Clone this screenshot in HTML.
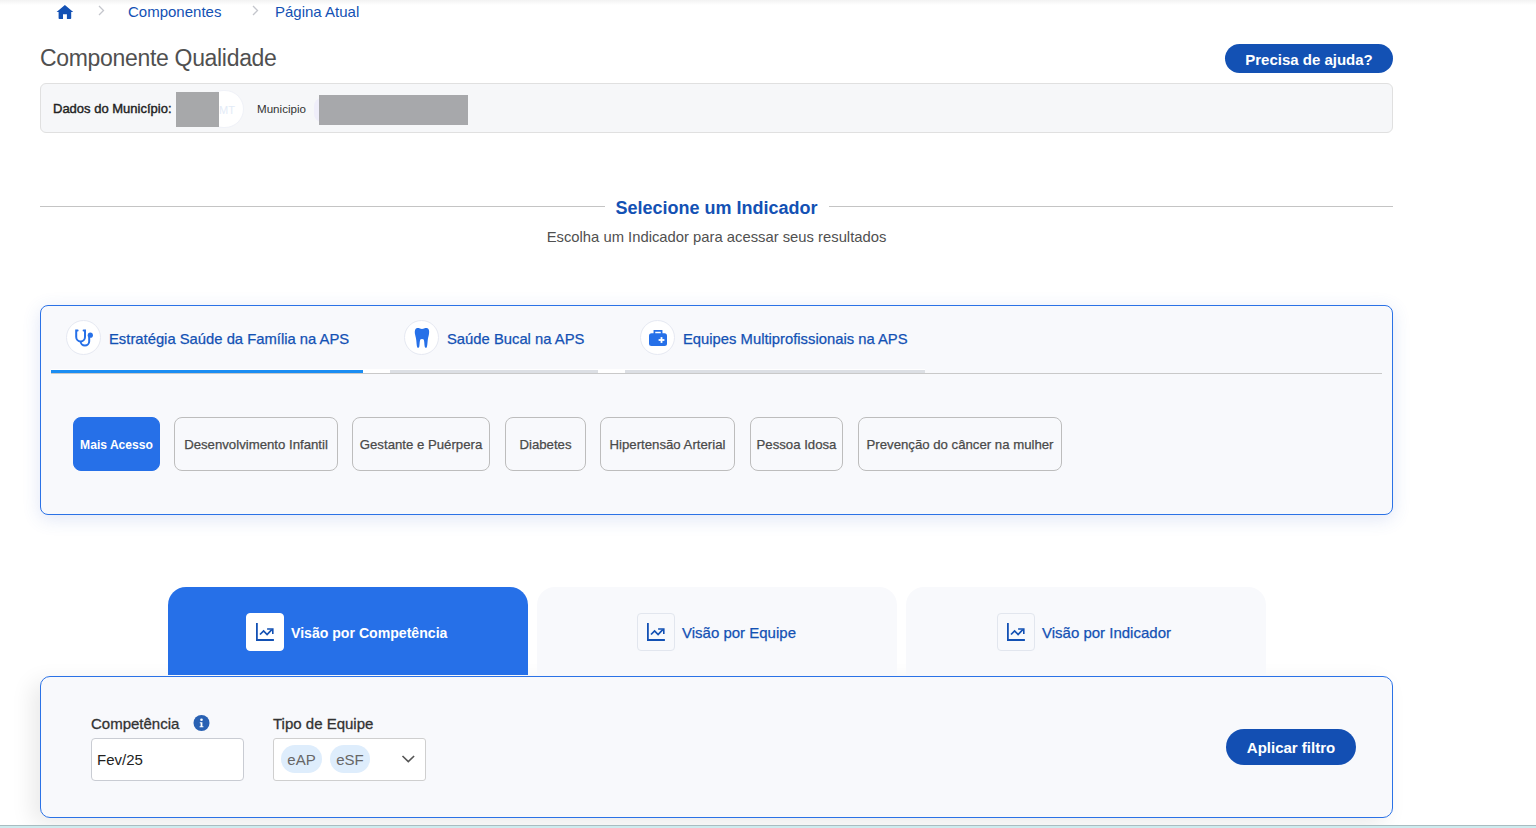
<!DOCTYPE html>
<html lang="pt-BR">
<head>
<meta charset="utf-8">
<title>Componente Qualidade</title>
<style>
*{box-sizing:border-box;margin:0;padding:0}
html,body{width:1536px;height:828px;overflow:hidden;background:#fff;font-family:"Liberation Sans",sans-serif;position:relative}
.abs{position:absolute}
.topshadow{position:absolute;left:0;top:0;width:1536px;height:5px;background:linear-gradient(#f2f2f2,#fff)}
.bottombar{position:absolute;left:0;top:825px;width:1536px;height:3px;background:#cdebee;border-top:1px solid #a9bcc0}
/* breadcrumb */
.crumb{position:absolute;top:3px;font-size:15px;color:#1351b4;white-space:nowrap;line-height:18px}
.chev{position:absolute;top:5px}
/* title */
.title{position:absolute;left:40px;top:44px;font-size:23px;color:#505050;line-height:28px;white-space:nowrap;letter-spacing:-0.32px}
.help{position:absolute;left:1225px;top:44px;width:168px;height:29px;border-radius:15px;background:#1351b4;color:#fff;font-weight:bold;font-size:15px;line-height:31px;text-align:center}
.mun{position:absolute;left:40px;top:83px;width:1353px;height:50px;border:1px solid #e0e0e0;border-radius:6px;background:#f6f7f9}
.hline{position:absolute;top:206px;height:1px;background:#c4c4c4}
.sel{position:absolute;left:0;width:1433px;top:197px;text-align:center;font-size:18px;font-weight:bold;color:#1351b4;line-height:22px;white-space:nowrap}
.sub{position:absolute;left:0;width:1433px;top:228px;text-align:center;font-size:14.8px;color:#505050;line-height:18px;white-space:nowrap}
.card{position:absolute;left:40px;top:305px;width:1353px;height:210px;border:1px solid #2b72e6;border-radius:8px;background:#f8f9fc;box-shadow:0 4px 18px rgba(60,100,200,.16)}
.tabtxt{position:absolute;top:330px;font-size:14.8px;-webkit-text-stroke:0.25px #1351b4;color:#1351b4;line-height:18px;white-space:nowrap}
.circ{position:absolute;top:320px;width:35px;height:35px;border-radius:50%;background:#fff;border:1px solid #e6e9f2}
.uline{position:absolute;top:370px;height:3px}
.ind{position:absolute;top:417px;height:54px;border:1px solid #bdbdbd;border-radius:8px;font-size:13.2px;color:#4a4a4a;-webkit-text-stroke:0.25px #4a4a4a;text-align:center;line-height:54px;white-space:nowrap;background:#f8f9fc}
.ind.on{background:#2670e8;border-color:#2670e8;color:#fff;font-weight:bold;font-size:12.1px;-webkit-text-stroke:0}
.vtab{position:absolute;top:587px;width:360px;height:89px;border-radius:18px 18px 0 0;background:#f8f9fc}
.vtab.on{background:#2670e8;height:88px}
.vicon{position:absolute;width:38px;height:38px;top:613px;border:1px solid #e2e6ee;border-radius:4px;background:#f8f9fc}
.vtxt{position:absolute;top:624px;font-size:15px;-webkit-text-stroke:0.25px #1351b4;color:#1351b4;line-height:18px;white-space:nowrap}
.filt{position:absolute;left:40px;top:676px;width:1353px;height:142px;border:1px solid #2b72e6;border-radius:10px;background:#f8f9fc;box-shadow:-8px 6px 22px rgba(0,0,0,.085)}
.lbl{position:absolute;top:715px;font-size:15px;color:#333;-webkit-text-stroke:0.3px #333;line-height:18px;white-space:nowrap}
.inp{position:absolute;top:738px;height:43px;background:#fff;border:1px solid #c9ccd3;border-radius:4px}
.chip{position:absolute;top:745px;height:28px;border-radius:14px;background:#deedfc;color:#666;font-size:15px;line-height:30px;text-align:center}
.apl{position:absolute;left:1226px;top:729px;width:130px;height:36px;border-radius:18px;background:#134fb3;color:#fff;font-weight:bold;font-size:15px;line-height:37px;text-align:center}
</style>
</head>
<body>
<div class="topshadow"></div>

<!-- breadcrumb -->
<svg class="abs" style="left:56px;top:4px" width="18" height="16" viewBox="0 0 18 16"><path d="M8.9 1 L0.6 8 L2.6 8 L2.6 14.2 Q2.6 15 3.4 15 L7 15 L7 10.3 L10.9 10.3 L10.9 15 L14.4 15 Q15.2 15 15.2 14.2 L15.2 8 L17.2 8 Z" fill="#1351b4"/></svg>
<svg class="chev" style="left:98px" width="7" height="11" viewBox="0 0 7 11"><path d="M1 1 L5.5 5.5 L1 10" fill="none" stroke="#c4c6cc" stroke-width="1.3"/></svg>
<div class="crumb" style="left:128px">Componentes</div>
<svg class="chev" style="left:252px" width="7" height="11" viewBox="0 0 7 11"><path d="M1 1 L5.5 5.5 L1 10" fill="none" stroke="#c4c6cc" stroke-width="1.3"/></svg>
<div class="crumb" style="left:275px">Página Atual</div>

<div class="title">Componente Qualidade</div>
<div class="help">Precisa de ajuda?</div>

<div class="mun"></div>
<div class="abs" style="left:53px;top:101px;font-size:13px;color:#222;-webkit-text-stroke:0.4px #222;line-height:16px;white-space:nowrap">Dados do Município:</div>
<div class="abs" style="left:204px;top:90px;width:40px;height:38px;border-radius:19px;background:#fff;border:1px solid #f0f2f8"></div>
<div class="abs" style="left:219px;top:103px;font-size:11px;color:#e3ebf7;line-height:14px">MT</div>
<div class="abs" style="left:176px;top:92px;width:43px;height:35px;background:#a7a8aa"></div>
<div class="abs" style="left:257px;top:102px;font-size:11.6px;color:#333;line-height:14px;white-space:nowrap">Municipio</div>
<div class="abs" style="left:314px;top:98px;width:16px;height:24px;border-radius:12px;background:#efeefa"></div>
<div class="abs" style="left:319px;top:95px;width:149px;height:30px;background:#a7a8ab"></div>

<div class="hline" style="left:40px;width:565px"></div>
<div class="hline" style="left:829px;width:564px"></div>
<div class="sel">Selecione um Indicador</div>
<div class="sub">Escolha um Indicador para acessar seus resultados</div>

<div class="card"></div>
<div class="abs" style="left:51px;top:373px;width:1331px;height:1px;background:#c9c9c9"></div>
<div class="abs" style="left:51px;top:369px;width:874px;height:4px;background:#fff"></div>
<div class="uline" style="left:51px;width:312px;background:#1b8df2"></div>
<div class="uline" style="left:390px;width:208px;background:#dcdfe4"></div>
<div class="uline" style="left:625px;width:300px;background:#dcdfe4"></div>
<div class="circ" style="left:66px"></div>
<svg class="abs" style="left:72px;top:326px" width="24" height="24" viewBox="0 0 24 24"><path d="M5.6 4.4 H4.2 V11 a4.4 4.4 0 0 0 8.8 0 V4.4 H11.6" fill="none" stroke="#2670e8" stroke-width="2" stroke-linecap="round"/><path d="M8.6 15.3 a4.3 4.3 0 0 0 8.6 0 V9.5" fill="none" stroke="#2670e8" stroke-width="2"/><circle cx="18.3" cy="9.2" r="2.6" fill="#2670e8"/></svg>
<div class="tabtxt" style="left:109px">Estratégia Saúde da Família na APS</div>
<div class="circ" style="left:404px"></div>
<svg class="abs" style="left:412px;top:326px" width="20" height="24" viewBox="0 0 20 24"><path d="M4.6 2.2 C6.5 1.6 8.2 2.6 10 3.1 C11.8 2.6 13.5 1.6 15.4 2.2 C17.3 2.8 17.4 6 16.9 8.5 C16.5 10.5 16 12 15.7 14.5 C15.4 17 15.4 20 14.7 21.4 C14.1 22.2 13 22 12.7 20.6 C12.3 18.5 12.4 15 11.7 13.6 C11.2 12.7 8.8 12.7 8.3 13.6 C7.6 15 7.7 18.5 7.3 20.6 C7 22 5.9 22.2 5.3 21.4 C4.6 20 4.6 17 4.3 14.5 C4 12 3.5 10.5 3.1 8.5 C2.6 6 2.7 2.8 4.6 2.2 Z" fill="#2670e8"/></svg>
<div class="tabtxt" style="left:447px">Saúde Bucal na APS</div>
<div class="circ" style="left:640px"></div>
<svg class="abs" style="left:648px;top:329px" width="20" height="18" viewBox="0 0 20 18"><path d="M6.4 5 V1.9 H13.6 V5" fill="none" stroke="#2670e8" stroke-width="1.7"/><rect x="1" y="4.2" width="18" height="12.8" rx="2.5" fill="#2670e8"/><rect x="10.6" y="10.1" width="5.8" height="1.8" fill="#fff"/><rect x="12.6" y="8.1" width="1.8" height="5.8" fill="#fff"/></svg>
<div class="tabtxt" style="left:683px">Equipes Multiprofissionais na APS</div>
<div class="ind on" style="left:73px;width:87px">Mais Acesso</div>
<div class="ind" style="left:174px;width:164px">Desenvolvimento Infantil</div>
<div class="ind" style="left:352px;width:138px">Gestante e Puérpera</div>
<div class="ind" style="left:505px;width:81px">Diabetes</div>
<div class="ind" style="left:600px;width:135px">Hipertensão Arterial</div>
<div class="ind" style="left:750px;width:93px">Pessoa Idosa</div>
<div class="ind" style="left:858px;width:204px">Prevenção do câncer na mulher</div>

<div class="filt"></div>
<div class="vtab on" style="left:168px"></div>
<div class="vtab" style="left:537px"></div>
<div class="vtab" style="left:906px"></div>
<div class="vicon" style="left:246px;background:#fff;border-color:#fff"></div>
<svg class="abs" style="left:246px;top:614px" width="36" height="36" viewBox="0 0 36 36"><path d="M10.9 9 V26 H27.9" fill="none" stroke="#1351b4" stroke-width="1.8"/><path d="M14 20.5 L17.6 16.9 L21.1 20.5 L25.8 15.6" fill="none" stroke="#1351b4" stroke-width="1.7"/><path d="M21.1 15 H26.8 V20" fill="none" stroke="#1351b4" stroke-width="1.6"/></svg>
<div class="vtxt" style="left:291px;color:#fff;font-weight:bold;font-size:14.1px;-webkit-text-stroke:0">Visão por Competência</div>
<div class="vicon" style="left:637px"></div>
<svg class="abs" style="left:637px;top:614px" width="36" height="36" viewBox="0 0 36 36"><path d="M10.9 9 V26 H27.9" fill="none" stroke="#1351b4" stroke-width="1.8"/><path d="M14 20.5 L17.6 16.9 L21.1 20.5 L25.8 15.6" fill="none" stroke="#1351b4" stroke-width="1.7"/><path d="M21.1 15 H26.8 V20" fill="none" stroke="#1351b4" stroke-width="1.6"/></svg>
<div class="vtxt" style="left:682px">Visão por Equipe</div>
<div class="vicon" style="left:997px"></div>
<svg class="abs" style="left:997px;top:614px" width="36" height="36" viewBox="0 0 36 36"><path d="M10.9 9 V26 H27.9" fill="none" stroke="#1351b4" stroke-width="1.8"/><path d="M14 20.5 L17.6 16.9 L21.1 20.5 L25.8 15.6" fill="none" stroke="#1351b4" stroke-width="1.7"/><path d="M21.1 15 H26.8 V20" fill="none" stroke="#1351b4" stroke-width="1.6"/></svg>
<div class="vtxt" style="left:1042px">Visão por Indicador</div>

<div class="lbl" style="left:91px">Competência</div>
<svg class="abs" style="left:193px;top:715px" width="17" height="17" viewBox="0 0 17 17"><circle cx="8.5" cy="8" r="8" fill="#2961b3"/><circle cx="8.5" cy="4.8" r="1.3" fill="#fff"/><path d="M6.8 7.2 H9.4 V11.2 H10.4 V12.3 H6.6 V11.2 H7.6 V8.3 H6.8 Z" fill="#fff"/></svg>
<div class="lbl" style="left:273px">Tipo de Equipe</div>
<div class="inp" style="left:91px;width:153px"></div>
<div class="abs" style="left:97px;top:751px;font-size:15px;color:#222;line-height:18px">Fev/25</div>
<div class="inp" style="left:273px;width:153px;border-color:#cfcfcf;border-radius:3px"></div>
<div class="chip" style="left:281px;width:41px">eAP</div>
<div class="chip" style="left:330px;width:40px">eSF</div>
<svg class="abs" style="left:401px;top:754px" width="15" height="10" viewBox="0 0 15 10"><path d="M1.5 2 L7.3 7.6 L13.1 2" fill="none" stroke="#555" stroke-width="1.6"/></svg>
<div class="apl">Aplicar filtro</div>

<div class="bottombar"></div>
</body>
</html>
